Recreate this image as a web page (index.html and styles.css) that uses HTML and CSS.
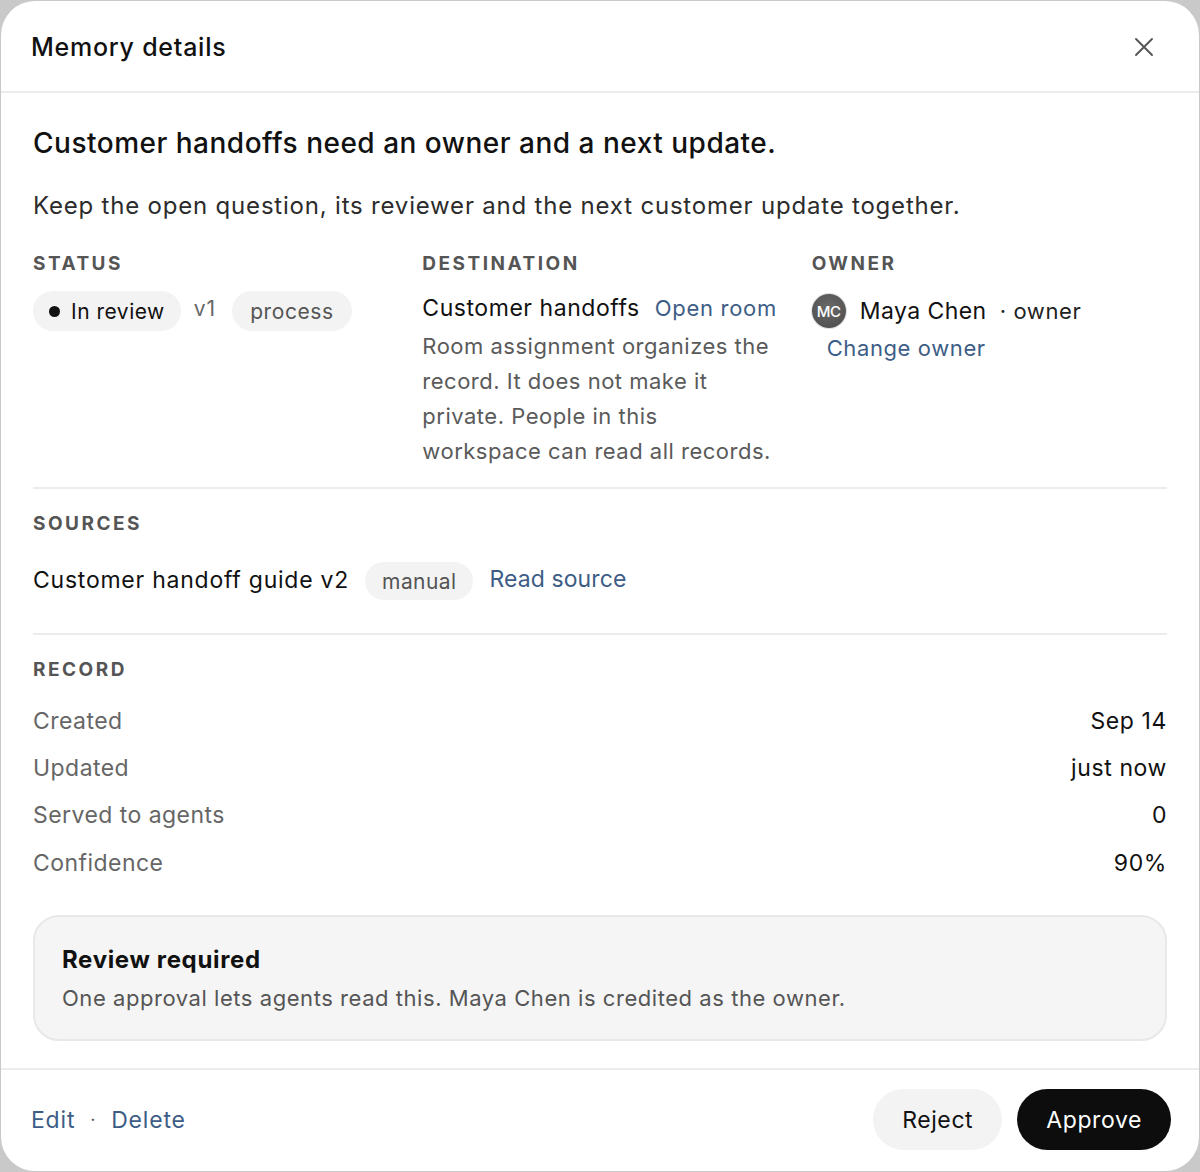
FILE: index.html
```html
<!DOCTYPE html>
<html lang="en">
<head>
<meta charset="utf-8">
<title>Memory details</title>
<link rel="stylesheet" href="styles.css">
</head>
<body>
<div class="modal">
  <header class="modal-header">
    <h1 class="modal-title">Memory details</h1>
    <button class="close" aria-label="Close">
      <svg width="22" height="22" viewBox="0 0 22 22"><path d="M3 3 L19 19 M19 3 L3 19" stroke="#555" stroke-width="1.9" stroke-linecap="round" fill="none"/></svg>
    </button>
  </header>
  <main class="modal-body">
    <h2 class="headline">Customer handoffs need an owner and a next update.</h2>
    <p class="summary">Keep the open question, its reviewer and the next customer update together.</p>

    <section class="meta-grid">
      <div class="meta-col">
        <div class="label">STATUS</div>
        <div class="status-row">
          <span class="chip chip-status"><span class="dot"></span>In review</span>
          <span class="version">v1</span>
          <span class="chip chip-muted">process</span>
        </div>
      </div>
      <div class="meta-col">
        <div class="label">DESTINATION</div>
        <div class="dest">
          <div class="dest-top"><span class="dest-name">Customer handoffs</span><a class="link dest-link" href="#">Open room</a></div>
          <p class="dest-note">Room assignment organizes the record. It does not make it private. People in this workspace can read all records.</p>
        </div>
      </div>
      <div class="meta-col">
        <div class="label">OWNER</div>
        <div class="owner-row">
          <span class="avatar">MC</span>
          <span class="owner-name">Maya Chen</span>
          <span class="owner-role">· owner</span>
        </div>
        <a class="link change-owner" href="#">Change owner</a>
      </div>
    </section>

    <section class="sources">
      <div class="label">SOURCES</div>
      <div class="source-row">
        <span class="source-name">Customer handoff guide v2</span>
        <span class="chip chip-muted chip-sm">manual</span>
        <a class="link source-link" href="#">Read source</a>
      </div>
    </section>

    <section class="record">
      <div class="label">RECORD</div>
      <dl class="record-list">
        <div class="record-row"><dt>Created</dt><dd>Sep 14</dd></div>
        <div class="record-row"><dt>Updated</dt><dd>just now</dd></div>
        <div class="record-row"><dt>Served to agents</dt><dd>0</dd></div>
        <div class="record-row"><dt>Confidence</dt><dd>90%</dd></div>
      </dl>
    </section>

    <div class="notice">
      <div class="notice-title">Review required</div>
      <div class="notice-text">One approval lets agents read this. Maya Chen is credited as the owner.</div>
    </div>
  </main>
  <footer class="modal-footer">
    <div class="footer-links">
      <a class="link" href="#">Edit</a>
      <span class="sep">·</span>
      <a class="link" href="#">Delete</a>
    </div>
    <div class="footer-actions">
      <button class="btn btn-secondary">Reject</button>
      <button class="btn btn-primary">Approve</button>
    </div>
  </footer>
</div>
</body>
</html>
```

FILE: styles.css
```css
* { box-sizing: border-box; }

html, body {
  margin: 0;
  padding: 0;
}

body {
  background: #c9c9c9;
  font-family: Inter, "Noto Sans", "Liberation Sans", sans-serif;
  color: #111;
  padding: 1px;
  letter-spacing: 0.6px;
}

.modal {
  background: #fff;
  border-radius: 34px;
  height: calc(100vh - 2px);
  display: flex;
  flex-direction: column;
  overflow: hidden;
}

.modal-header {
  height: 92px;
  border-bottom: 2px solid #ececec;
  display: flex;
  align-items: center;
  justify-content: space-between;
  padding: 2px 44px 0 30px;
  flex-shrink: 0;
}

.modal-title {
  margin: 0;
  font-size: 25px;
  font-weight: 500;
  letter-spacing: 0.75px;
}

.close {
  background: none;
  border: 0;
  padding: 0;
  width: 22px;
  height: 22px;
  display: flex;
}

.modal-body {
  flex: 1;
  padding: 32px 32px 0 32px;
}

.headline {
  margin: 0;
  font-size: 28px;
  line-height: 36px;
  font-weight: 500;
  letter-spacing: 0.5px;
}

.summary {
  margin: 28px 0 0;
  font-size: 24px;
  line-height: 34px;
  color: #2c2c2c;
  letter-spacing: 0.8px;
}

.label {
  font-size: 19px;
  line-height: 24px;
  font-weight: 700;
  letter-spacing: 2.5px;
  color: #555;
}

.meta-grid {
  display: grid;
  grid-template-columns: repeat(3, 1fr);
  column-gap: 34px;
  margin-top: 29px;
  padding-bottom: 18px;
  border-bottom: 2px solid #ececec;
}

.status-row {
  display: flex;
  align-items: center;
  gap: 13px;
  margin-top: 15px;
}

.chip {
  display: inline-flex;
  align-items: center;
  height: 40px;
  padding: 0 18px;
  border-radius: 20px;
  background: #f3f3f3;
  font-size: 21px;
}

.chip-status {
  color: #111;
  padding: 0 16px 0 16px;
  gap: 11px;
  letter-spacing: 0.5px;
}

.dot {
  width: 11px;
  height: 11px;
  border-radius: 50%;
  background: #111;
}

.chip-muted {
  color: #555;
}

.version {
  font-size: 21px;
  color: #666;
  margin-top: -6px;
  padding: 0 3px 0 0;
  letter-spacing: 1px;
}

.dest {
  margin-top: 13px;
}

.dest-top {
  line-height: 38px;
}

.dest-name {
  color: #111;
  font-size: 23px;
  letter-spacing: 0.55px;
}

.dest-link {
  margin-left: 15px;
  font-size: 22px;
  letter-spacing: 0.7px;
}

.dest-note {
  margin: 0;
  font-size: 22px;
  line-height: 35px;
  color: #5a5a5a;
  letter-spacing: 0.5px;
}

.link {
  color: #3d5d86;
  text-decoration: none;
}

.owner-row {
  display: flex;
  align-items: center;
  margin-top: 18px;
  font-size: 23px;
}

.avatar {
  width: 34px;
  height: 34px;
  border-radius: 50%;
  background: radial-gradient(circle at 50% 40%, #6a6a6a, #4a4a4a);
  color: #fff;
  font-size: 15px;
  font-weight: 500;
  display: inline-flex;
  align-items: center;
  justify-content: center;
  letter-spacing: -0.5px;
  box-shadow: 0 0 0 1px #ddd;
}

.owner-name {
  margin-left: 14px;
  color: #111;
  letter-spacing: 0.45px;
}

.owner-role {
  margin-left: 13px;
  font-size: 22px;
  color: #222;
}

.change-owner {
  display: block;
  margin: 5px 0 0 15px;
  font-size: 22px;
  line-height: 30px;
}

.sources {
  padding: 23px 0 33px;
  border-bottom: 2px solid #ececec;
}

.source-row {
  display: flex;
  align-items: center;
  gap: 16px;
  margin-top: 24px;
  font-size: 23px;
}

.source-name {
  color: #111;
  letter-spacing: 0.76px;
}

.chip-sm {
  height: 38px;
  padding: 0 17px;
  margin-top: 2px;
  letter-spacing: 0.4px;
}

.source-link {
  margin-top: -3px;
  letter-spacing: 0.1px;
}

.record {
  padding-top: 23px;
}

.record-list {
  margin: 15px 0 0;
}

.record-row {
  display: flex;
  justify-content: space-between;
  align-items: center;
  height: 47.3px;
  font-size: 23px;
}

.record-row dt {
  color: #666;
  letter-spacing: 0.45px;
}

.record-row dd {
  margin: 0;
  color: #111;
}

.notice {
  margin-top: 29px;
  background: #f5f5f5;
  border: 2px solid #e8e8e8;
  border-radius: 26px;
  padding: 26px 27px 26px;
}

.notice-title {
  font-size: 24px;
  line-height: 34px;
  font-weight: 700;
  color: #111;
  letter-spacing: 0.65px;
}

.notice-text {
  margin-top: 6px;
  font-size: 22px;
  line-height: 30px;
  color: #555;
  letter-spacing: 0.55px;
}

.modal-footer {
  height: 103px;
  border-top: 2px solid #ececec;
  display: flex;
  align-items: center;
  justify-content: space-between;
  padding: 0 28px 2px 30px;
  flex-shrink: 0;
}

.footer-links {
  display: flex;
  align-items: center;
  font-size: 23px;
  letter-spacing: 0.8px;
}

.sep {
  color: #555;
  margin: 0 15px;
  font-size: 18px;
}

.footer-actions {
  display: flex;
  gap: 15px;
}

.btn {
  height: 61px;
  border: 0;
  border-radius: 31px;
  font-family: inherit;
  font-size: 23px;
  letter-spacing: 0.6px;
  padding: 0 29px;
}

.btn-secondary {
  background: #f3f3f3;
  color: #111;
}

.btn-primary {
  background: #0d0d0d;
  color: #fff;
}
```
